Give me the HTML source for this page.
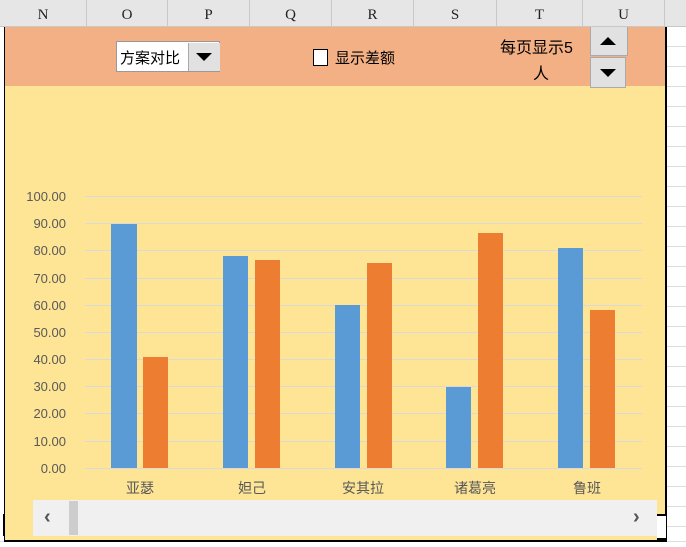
<!DOCTYPE html>
<html><head><meta charset="utf-8"><style>
body{margin:0;width:686px;height:546px;overflow:hidden;background:#fff;font-family:"Liberation Sans","Noto Sans CJK SC",sans-serif;position:relative}
.a{position:absolute}
.hd{top:0;left:0;width:686px;height:26px;background:#e6e6e6;border-bottom:1px solid #c8c8c8}
.col{position:absolute;top:0;height:26px;font-family:"Liberation Serif",serif;font-size:15px;line-height:30px;text-align:center;color:#222;border-right:1px solid #c8c8c8;box-sizing:border-box}
</style></head><body>
<div class="a hd">
<div class="col" style="left:0;width:87px">N</div>
<div class="col" style="left:87px;width:81px">O</div>
<div class="col" style="left:168px;width:82px">P</div>
<div class="col" style="left:250px;width:82px">Q</div>
<div class="col" style="left:332px;width:82px">R</div>
<div class="col" style="left:414px;width:83px">S</div>
<div class="col" style="left:497px;width:86px">T</div>
<div class="col" style="left:583px;width:82px">U</div>
</div>
<!-- grid lines outside -->
<div class="a" style="left:666px;top:27px;width:20px;height:519px;background:repeating-linear-gradient(#fff 0 19px,#ddd 19px 20px)"></div>
<div class="a" style="left:0;top:541px;width:686px;height:5px;background:#fff;border-top:1px solid #ddd"></div>
<!-- frame -->
<div class="a" style="left:4px;top:27px;width:660px;height:513px;border:1px solid #000;border-top:none;border-left:1px solid #000;border-right:2px solid #000;border-bottom:2px solid #000;background:#fde595"></div>
<div class="a" style="left:5px;top:27px;width:660px;height:59px;background:#f3b085"></div>
<!-- dropdown -->
<div class="a" style="left:116px;top:41px;width:104px;height:31px;background:#fff;border:1px solid #999;box-sizing:border-box"></div>
<div class="a" style="left:120px;top:47px;font-size:15px;color:#000">方案对比</div>
<div class="a" style="left:188px;top:43px;width:31px;height:28px;background:#e1e1e1;border-left:1px solid #aaa"></div>
<div class="a" style="left:196px;top:53px;width:0;height:0;border-left:8px solid transparent;border-right:8px solid transparent;border-top:8px solid #000"></div>
<!-- checkbox -->
<div class="a" style="left:313px;top:49px;width:13px;height:15px;background:#fff;border:1px solid #000"></div>
<div class="a" style="left:335px;top:47px;font-size:15px;color:#000">显示差额</div>
<div class="a" style="left:500px;top:34px;font-size:16px;color:#000">每页显示5</div>
<div class="a" style="left:533px;top:60px;font-size:16px;color:#000">人</div>
<!-- spinner -->
<div class="a" style="left:590px;top:27px;width:36px;height:28px;background:#e1e1e1;border:1px solid #aaa;border-top:none"></div>
<div class="a" style="left:600px;top:37px;border-left:8px solid transparent;border-right:8px solid transparent;border-bottom:8px solid #000"></div>
<div class="a" style="left:590px;top:57px;width:36px;height:31px;background:#e1e1e1;border:1px solid #aaa;box-sizing:border-box"></div>
<div class="a" style="left:600px;top:69px;border-left:8px solid transparent;border-right:8px solid transparent;border-top:8px solid #000"></div>
<!-- chart -->
<svg class="a" style="left:0;top:0" width="686" height="546">
<g stroke="#d9d9d9" stroke-width="1">
<line x1="85" x2="642" y1="196.5" y2="196.5"/><line x1="85" x2="642" y1="223.5" y2="223.5"/><line x1="85" x2="642" y1="250.5" y2="250.5"/><line x1="85" x2="642" y1="278.5" y2="278.5"/><line x1="85" x2="642" y1="305.5" y2="305.5"/><line x1="85" x2="642" y1="332.5" y2="332.5"/><line x1="85" x2="642" y1="359.5" y2="359.5"/><line x1="85" x2="642" y1="386.5" y2="386.5"/><line x1="85" x2="642" y1="413.5" y2="413.5"/><line x1="85" x2="642" y1="441.5" y2="441.5"/><line x1="85" x2="642" y1="468.5" y2="468.5"/>
</g>
<g font-size="13" fill="#595959" text-anchor="end" font-family="Liberation Sans,sans-serif">
<text x="66" y="201">100.00</text><text x="66" y="228">90.00</text><text x="66" y="255">80.00</text><text x="66" y="283">70.00</text><text x="66" y="310">60.00</text><text x="66" y="337">50.00</text><text x="66" y="364">40.00</text><text x="66" y="391">30.00</text><text x="66" y="418">20.00</text><text x="66" y="446">10.00</text><text x="66" y="473">0.00</text>
</g>
<g fill="#5b9bd5">
<rect x="111" y="224" width="26" height="244"/><rect x="223" y="256" width="25" height="212"/><rect x="335" y="305" width="25" height="163"/><rect x="446" y="387" width="25" height="81"/><rect x="558" y="248" width="25" height="220"/>
</g>
<g fill="#ed7d31">
<rect x="143" y="357" width="25" height="111"/><rect x="255" y="260" width="25" height="208"/><rect x="367" y="263" width="25" height="205"/><rect x="478" y="233" width="25" height="235"/><rect x="590" y="310" width="25" height="158"/>
</g>
<g font-size="14" fill="#595959" text-anchor="middle" font-family="Noto Sans CJK SC,sans-serif">
<text x="140" y="493">亚瑟</text><text x="252" y="493">妲己</text><text x="363" y="493">安其拉</text><text x="475" y="493">诸葛亮</text><text x="587" y="493">鲁班</text>
</g>
</svg>
<!-- scrollbar -->
<div class="a" style="left:33px;top:500px;width:624px;height:36px;background:#f0f0f0"></div>
<div class="a" style="left:69px;top:501px;width:9px;height:34px;background:#cdcdcd"></div>
<div class="a" style="left:44px;top:506px;font-size:20px;color:#555;font-weight:bold">‹</div>
<div class="a" style="left:633px;top:506px;font-size:20px;color:#555;font-weight:bold">›</div>
<div class="a" style="left:657px;top:514px;width:9px;height:22px;border-top:2px solid #000;border-bottom:2px solid #000;background:#fff"></div>
<div class="a" style="left:3px;top:514px;width:2px;height:22px;background:#000"></div>
</body></html>
